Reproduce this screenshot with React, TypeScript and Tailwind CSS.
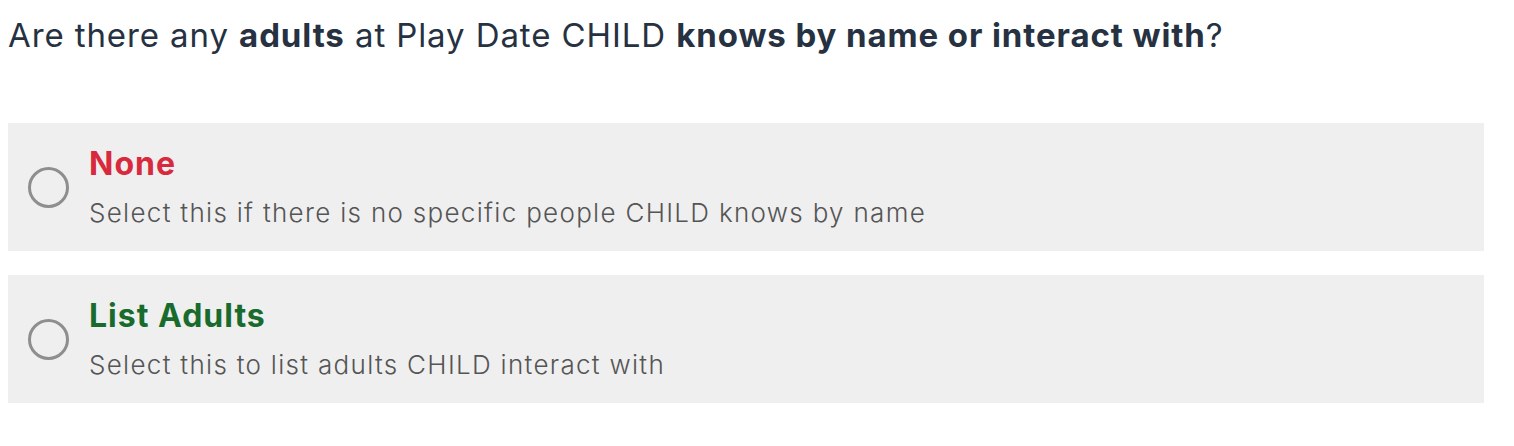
import { useState } from "react";

interface OptionProps {
  title: string;
  description: string;
  titleClass: string;
  selected: boolean;
  onSelect: () => void;
}

const Option: React.FC<OptionProps> = ({ title, description, titleClass, selected, onSelect }) => {
  return (
    <label
      className="flex h-[128px] w-[1476px] cursor-pointer items-center bg-[#efefef] pl-[20px]"
      onClick={onSelect}
    >
      <span className="flex h-[41px] w-[41px] shrink-0 items-center justify-center rounded-full border-[3px] border-[#8e8e8e]">
        {selected && <span className="h-[21px] w-[21px] rounded-full bg-[#8e8e8e]" />}
      </span>
      <span className="ml-[20px] flex flex-col">
        <span className={`text-[32px] leading-[38px] font-bold tracking-[1px] ${titleClass}`}>{title}</span>
        <span className="mt-[13px] text-[26px] leading-[34px] font-light tracking-[1.3px] text-[#555555]">
          {description}
        </span>
      </span>
    </label>
  );
};

export default function App() {
  const [choice, setChoice] = useState("");

  return (
    <div className="min-h-[446px] bg-white px-[8px] pt-[15px] font-['Inter',sans-serif]">
      <h2 className="text-[33px] leading-[40px] font-normal tracking-[0.9px] text-[#263141]">
        Are there any <span className="font-bold">adults</span> at Play Date CHILD{" "}
        <span className="font-bold">knows by name or interact with</span>?
      </h2>
      <div className="mt-[68px] flex flex-col gap-[24px]">
        <Option
          title="None"
          description="Select this if there is no specific people CHILD knows by name"
          titleClass="text-[#d82a3c]"
          selected={choice === "none"}
          onSelect={() => setChoice("none")}
        />
        <Option
          title="List Adults"
          description="Select this to list adults CHILD interact with"
          titleClass="text-[#186b2c]"
          selected={choice === "list"}
          onSelect={() => setChoice("list")}
        />
      </div>
    </div>
  );
}
